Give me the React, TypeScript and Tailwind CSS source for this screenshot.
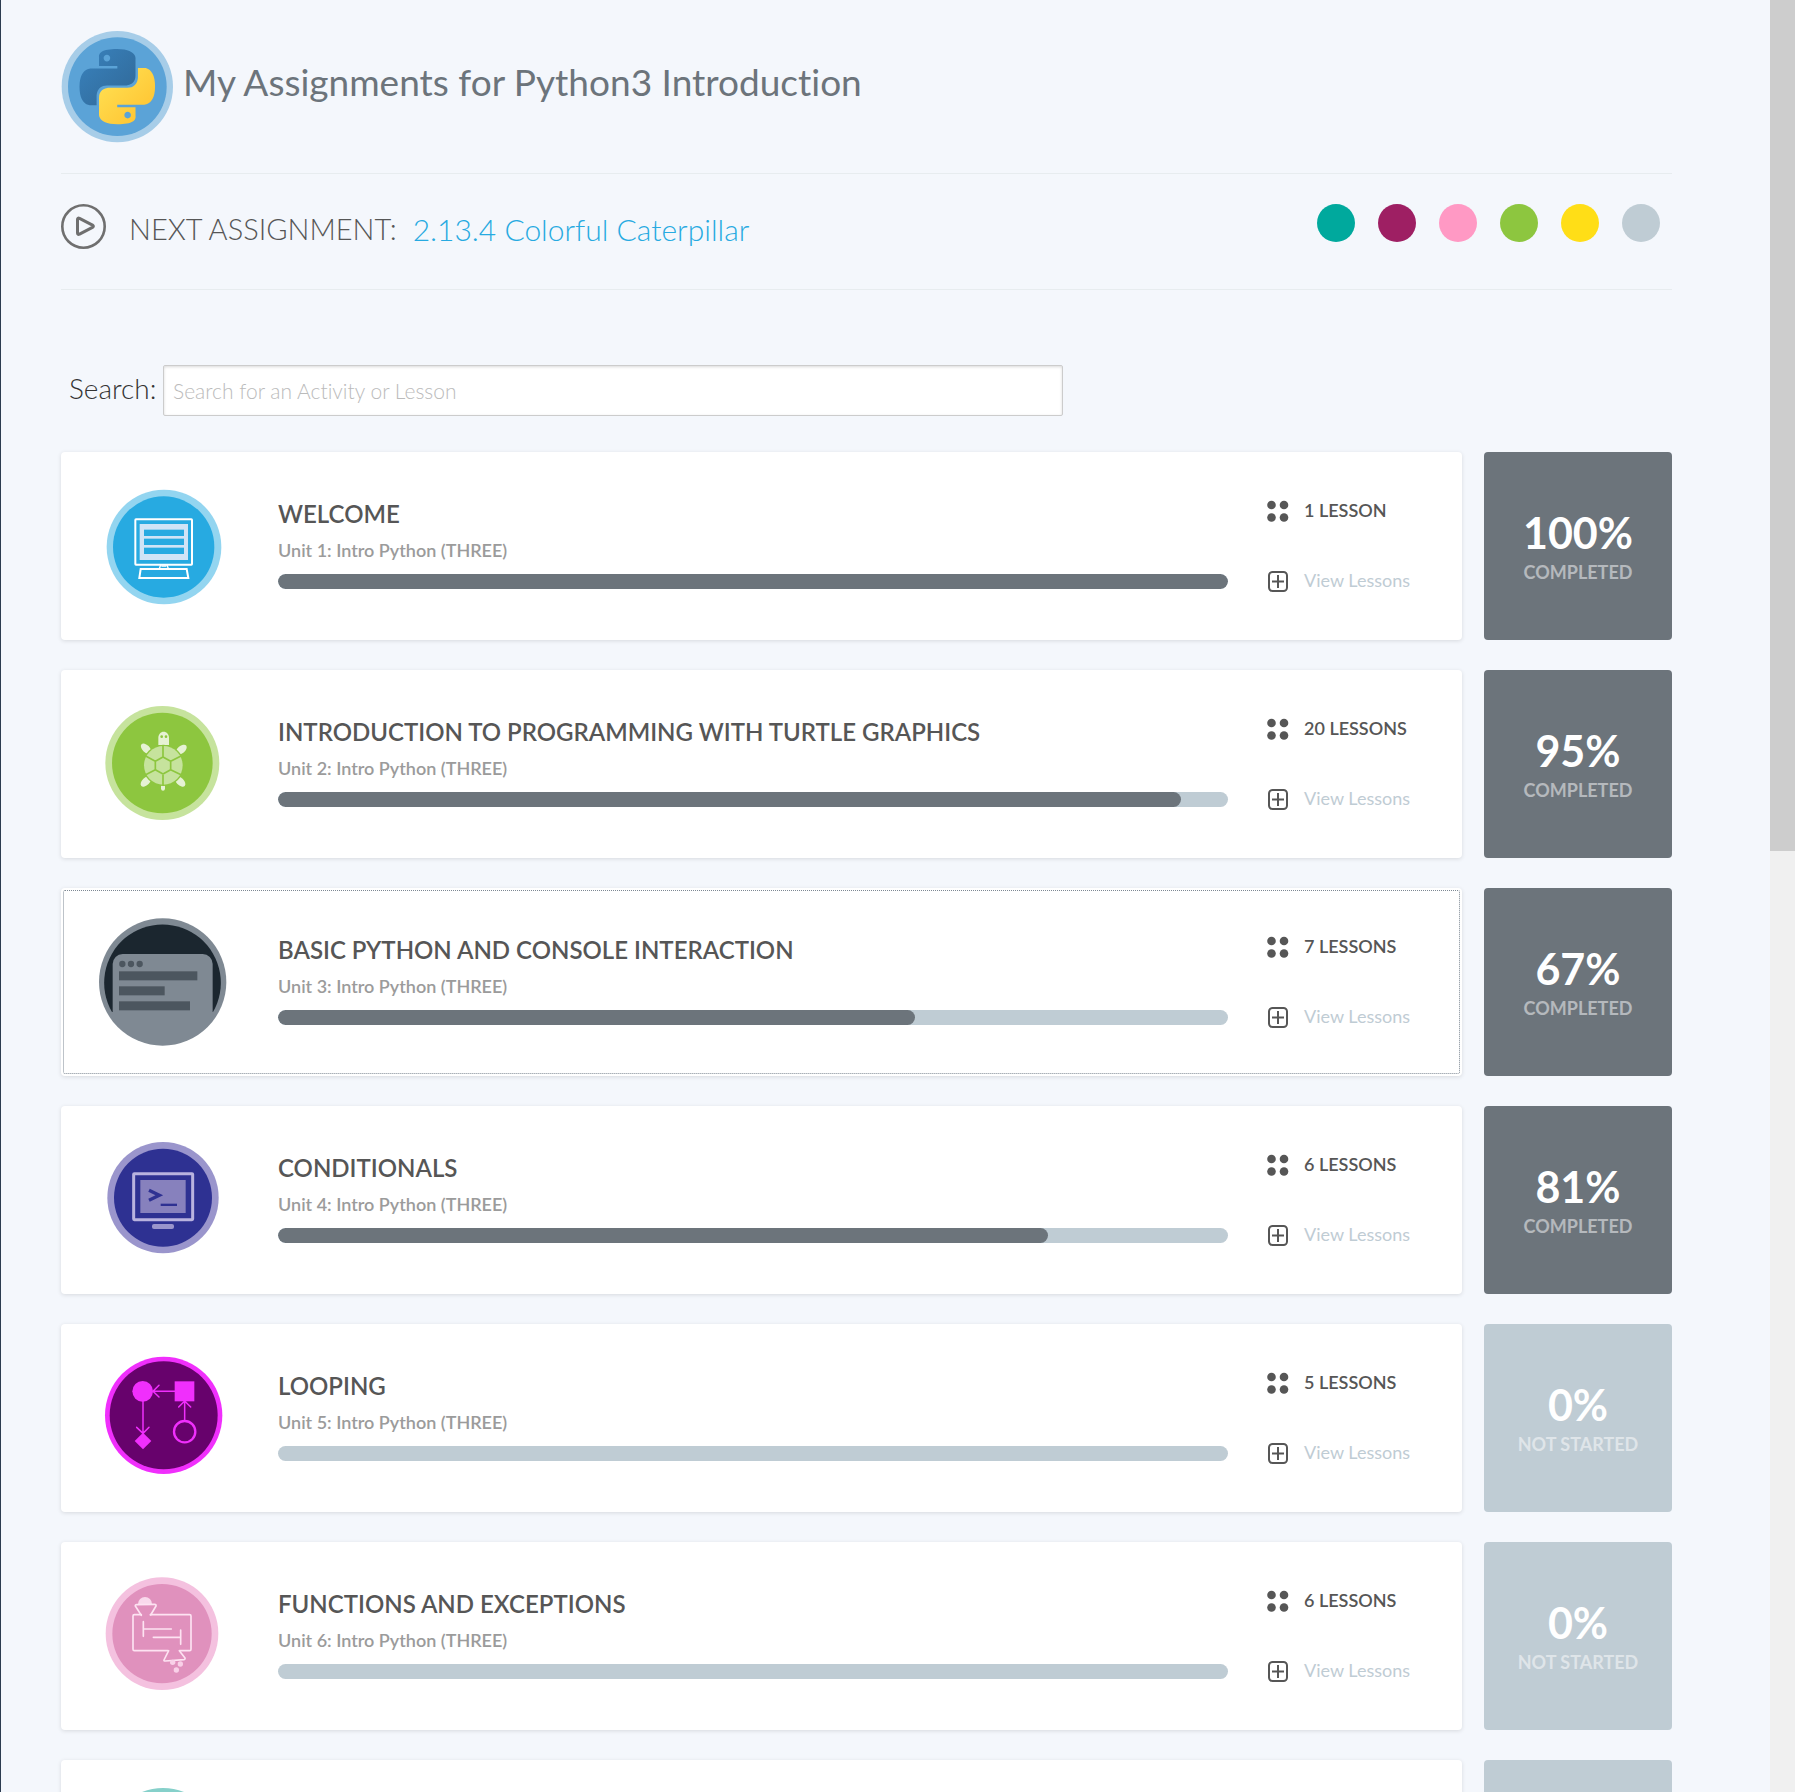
import type { ReactNode } from "react";

const PY_SNAKE =
  "M14.25.18l.9.2.73.26.59.3.45.32.34.34.25.34.16.33.1.3.04.26.02.2-.01.13V8.5l-.05.63-.13.55-.21.46-.26.38-.3.31-.33.25-.35.19-.35.14-.33.1-.3.07-.26.04-.21.02H8.77l-.69.05-.59.14-.5.22-.41.27-.33.32-.27.35-.2.36-.15.37-.1.35-.07.32-.04.27-.02.21v3.06H3.17l-.21-.03-.28-.07-.32-.12-.35-.18-.36-.26-.36-.36-.35-.46-.32-.59-.28-.73-.21-.88-.14-1.05-.05-1.23.06-1.22.16-1.04.24-.87.32-.71.36-.57.4-.44.42-.33.42-.24.4-.16.36-.1.32-.05.24-.01h.16l.06.01h8.16v-.83H6.18l-.01-2.75-.02-.37.05-.34.11-.31.17-.28.25-.26.31-.23.38-.2.44-.18.51-.15.58-.12.64-.1.71-.06.77-.04.84-.02 1.27.05zm-6.3 1.98l-.23.33-.08.41.08.41.23.34.33.22.41.09.41-.09.33-.22.23-.34.08-.41-.08-.41-.23-.33-.33-.22-.41-.09-.41.09z";

function PythonLogo() {
  return (
    <svg viewBox="64 33 336 336" className="size-28 shrink-0" aria-hidden="true">
      <defs>
        <linearGradient id="py-blue" x1="0" y1="0" x2="1" y2="1">
          <stop offset="0.1" stopColor="#3880ba" />
          <stop offset="0.9" stopColor="#316a9a" />
        </linearGradient>
        <linearGradient id="py-yellow" x1="1" y1="1" x2="0" y2="0">
          <stop offset="0.1" stopColor="#ffe052" />
          <stop offset="0.9" stopColor="#ffc331" />
        </linearGradient>
      </defs>
      <circle cx="233" cy="200" r="167" fill="#a7cde8" />
      <circle cx="233" cy="200" r="148" fill="#5ba3d7" />
      <g transform="translate(120 87) scale(9.4)">
        <path d={PY_SNAKE} fill="url(#py-blue)" />
        <path d={PY_SNAKE} fill="url(#py-yellow)" transform="rotate(180 12 12)" />
      </g>
    </svg>
  );
}

function UnitSvg({ top = 0, children }: { top?: number; children: ReactNode }) {
  return (
    <svg viewBox={`0 ${top} 450 450`} className="size-[150px]" aria-hidden="true">
      {children}
    </svg>
  );
}

function ComputerIcon() {
  return (
    <UnitSvg top={3}>
      <circle cx="222" cy="231" r="172" fill="#93d5f0" />
      <circle cx="221" cy="231" r="152" fill="#27aae1" />
      <rect x="136" y="148" width="170" height="136" rx="2" fill="none" stroke="#fff" strokeWidth="6" />
      <rect x="149" y="162" width="145" height="108" fill="#d0e4f6" />
      <rect x="162" y="179" width="120" height="19" fill="#27aae1" />
      <rect x="162" y="206" width="120" height="19" fill="#27aae1" />
      <rect x="162" y="233" width="120" height="19" fill="#27aae1" />
      <path d="M212 284l-4 12M231 284l4 12M214 288h15" stroke="#fff" strokeWidth="4" fill="none" />
      <path d="M152 297h138l5 27H148z" stroke="#fff" strokeWidth="6" fill="none" />
    </UnitSvg>
  );
}

function TurtleIcon() {
  return (
    <UnitSvg>
      <circle cx="217" cy="222" r="171" fill="#c6e39d" />
      <circle cx="217" cy="222" r="151" fill="#8dc63f" />
      <g fill="#e6f2d4">
        <path d="M205 168v-22c0-10 7-18 16-18s16 8 16 18v22z" />
        <ellipse cx="168" cy="179" rx="11" ry="19" transform="rotate(-45 168 179)" />
        <ellipse cx="274" cy="182" rx="11" ry="19" transform="rotate(50 274 182)" />
        <ellipse cx="168" cy="277" rx="11" ry="20" transform="rotate(45 168 277)" />
        <ellipse cx="270" cy="277" rx="11" ry="20" transform="rotate(-45 270 277)" />
        <path d="M213 288h12v10c0 10-12 10-12 0z" />
      </g>
      <circle cx="215" cy="143" r="4" fill="#8dc63f" />
      <circle cx="228" cy="143" r="4" fill="#8dc63f" />
      <circle cx="220" cy="229" r="62" fill="#8dc63f" />
      <circle cx="220" cy="229" r="58" fill="#c6e39d" />
      <path
        d="M219 204l23 13v25l-23 13-23-13v-25zM219 170v34M219 255v34M242 217l31-16M242 242l31 15M196 217l-29-16M196 242l-29 15"
        fill="none"
        stroke="#8dc63f"
        strokeWidth="5"
      />
    </UnitSvg>
  );
}

function ConsoleIcon() {
  return (
    <UnitSvg top={6}>
      <circle cx="218" cy="231" r="191" fill="#7f8993" />
      <path d="M66 321A175 175 0 1 1 369 321z" fill="#1b262f" />
      <path d="M68 330V177a30 30 0 0 1 30-30h240a30 30 0 0 1 30 30v153z" fill="#7f8993" />
      <g fill="#4c565f">
        <circle cx="97" cy="177" r="9.500" />
        <circle cx="123" cy="177" r="9.500" />
        <circle cx="149" cy="177" r="9.500" />
        <rect x="87" y="199" width="235" height="27" />
        <rect x="87" y="244" width="137" height="27" />
        <rect x="87" y="289" width="213" height="27" />
      </g>
    </UnitSvg>
  );
}

function TerminalIcon() {
  return (
    <UnitSvg>
      <circle cx="219" cy="218" r="167" fill="#9a95cc" />
      <circle cx="219" cy="218" r="147" fill="#2e3192" />
      <rect x="131" y="146" width="177" height="138" rx="2" fill="none" stroke="#b9b3df" strokeWidth="9" />
      <rect x="151" y="165" width="136" height="99" fill="#8781bd" />
      <path d="M177 196l31 15-31 15" fill="none" stroke="#2e3192" strokeWidth="10" />
      <rect x="212" y="236" width="49" height="7" fill="#2e3192" />
      <rect x="186" y="297" width="66" height="15" rx="6" fill="#9a95cc" />
    </UnitSvg>
  );
}

function FlowIcon() {
  return (
    <UnitSvg top={9}>
      <circle cx="221" cy="226" r="176" fill="#f02ffc" />
      <circle cx="221" cy="226" r="162" fill="#67026c" />
      <g fill="#f02ffc">
        <circle cx="158" cy="154" r="31" />
        <rect x="254" y="124" width="59" height="60" />
        <path d="M159 278l25 25-25 25-25-25z" />
      </g>
      <g fill="none" stroke="#f02ffc" strokeWidth="4.500" strokeLinecap="round">
        <path d="M254 154h-65M207 136l-18 18 18 17M159 184v94M140 262l19 18 18-18M284 241v-57M266 201l18-18 18 18" />
        <circle cx="284" cy="275" r="32" strokeWidth="7" />
      </g>
    </UnitSvg>
  );
}

function FunctionIcon() {
  return (
    <UnitSvg top={3}>
      <circle cx="216" cy="221" r="169" fill="#f4c1df" />
      <circle cx="216" cy="221" r="149" fill="#e091bd" />
      <path d="M144 132a21 21 0 0 1 42 0z" fill="#f9d9ec" />
      <g fill="none" stroke="#fde3f2" strokeWidth="5" strokeLinejoin="round" strokeLinecap="round">
        <path d="M154 164h-21q-4 0-4 4v100q0 4 4 4h100M270 272h29q4 0 4-4V168q0-4-4-4H181" />
        <path d="M154 166l-18-28q-1-4 4-4l54-1q5 0 4 5l-16 27" />
        <path d="M236 272l-14 28q-1 3 4 3l56-4q4-1 3-5l-17-22" />
        <path d="M160 185v44M160 207h84M272 210v43M272 232h-82" />
      </g>
      <g fill="#f9d0e8">
        <circle cx="248" cy="307" r="8" />
        <circle cx="271" cy="312" r="8" />
        <circle cx="259" cy="330" r="8" />
      </g>
    </UnitSvg>
  );
}

function TealIcon() {
  return (
    <UnitSvg top={3}>
      <circle cx="219" cy="201" r="171" fill="#86d0ca" />
      <circle cx="219" cy="201" r="151" fill="#00a99d" />
    </UnitSvg>
  );
}

function DotsIcon() {
  return (
    <svg viewBox="0 0 24 24" className="size-6 shrink-0" fill="#565656" aria-hidden="true">
      <circle cx="5.500" cy="7" r="4.300" />
      <circle cx="18" cy="7" r="4.300" />
      <circle cx="5.500" cy="19.500" r="4.300" />
      <circle cx="18" cy="19.500" r="4.300" />
    </svg>
  );
}

function PlusBoxIcon() {
  return (
    <svg viewBox="0 0 24 24" className="size-6 shrink-0" fill="none" stroke="#565656" strokeWidth="2" aria-hidden="true">
      <rect x="3" y="4" width="18" height="19" rx="3.500" />
      <path d="M6 13.500h12M12 7v13" />
    </svg>
  );
}

function PlayIcon() {
  return (
    <svg viewBox="0 0 45 45" className="size-[45px] shrink-0" fill="none" stroke="#6f6f6f" aria-hidden="true">
      <circle cx="22.500" cy="22.500" r="21.200" strokeWidth="2.600" />
      <path d="M16.500 15.500q0-2 2-1.200l13 6.800q1.800 1.200 0 2.300l-13 6.800q-2 .8-2-1.200z" strokeWidth="3" strokeLinejoin="round" />
    </svg>
  );
}

type Unit = {
  title: string;
  number: number;
  lessons: number;
  percent: number;
  icon: ReactNode;
  focused?: boolean;
};

const units: Unit[] = [
  { title: "WELCOME", number: 1, lessons: 1, percent: 100, icon: <ComputerIcon /> },
  { title: "INTRODUCTION TO PROGRAMMING WITH TURTLE GRAPHICS", number: 2, lessons: 20, percent: 95, icon: <TurtleIcon /> },
  { title: "BASIC PYTHON AND CONSOLE INTERACTION", number: 3, lessons: 7, percent: 67, icon: <ConsoleIcon />, focused: true },
  { title: "CONDITIONALS", number: 4, lessons: 6, percent: 81, icon: <TerminalIcon /> },
  { title: "LOOPING", number: 5, lessons: 5, percent: 0, icon: <FlowIcon /> },
  { title: "FUNCTIONS AND EXCEPTIONS", number: 6, lessons: 6, percent: 0, icon: <FunctionIcon /> },
];

function UnitCard({ unit }: { unit: Unit }) {
  const started = unit.percent > 0;
  return (
    <li className="flex gap-[22px]">
      <article
        className={
          unit.focused
            ? "flex flex-1 rounded bg-white pr-[50px] pl-[29px] shadow-[0_1px_4px_rgba(0,0,0,0.12)] outline-1 -outline-offset-3 outline-dotted outline-[#7d8893]"
            : "flex flex-1 rounded bg-white pr-[50px] pl-[29px] shadow-[0_1px_4px_rgba(0,0,0,0.12)]"
        }
      >
        <div className="flex items-center">{unit.icon}</div>
        <div className="ml-[38px] flex-1 pt-12">
          <h2 className="text-2xl leading-7 font-semibold text-[#565656]">{unit.title}</h2>
          <p className="mt-[10px] text-lg leading-6 font-semibold text-[#9b9b9b]">Unit {unit.number}: Intro Python (THREE)</p>
          <div className="mt-3 h-[15px] overflow-hidden rounded-full bg-[#bfccd4]">
            <div className="h-full rounded-full bg-[#6c747b]" style={{ width: `${unit.percent}%` }} />
          </div>
        </div>
        <div className="ml-[38px] flex w-[146px] flex-col gap-[46px] pt-[46px]">
          <p className="flex gap-[14px] text-lg leading-6 font-semibold whitespace-nowrap text-[#565656]">
            <DotsIcon />
            {unit.lessons} {unit.lessons === 1 ? "LESSON" : "LESSONS"}
          </p>
          <button type="button" className="flex gap-[14px] text-lg leading-6 whitespace-nowrap text-[#bfccd4]">
            <PlusBoxIcon />
            View Lessons
          </button>
        </div>
      </article>
      <div
        className={
          started
            ? "aspect-square w-[188px] rounded bg-[#6c747b] pt-[57px] text-center font-bold"
            : "aspect-square w-[188px] rounded bg-[#bfccd4] pt-[57px] text-center font-bold"
        }
      >
        <p className="text-[43px] leading-12 text-white">{unit.percent}%</p>
        <p className="mt-[3px] text-lg leading-6 text-white/50">{started ? "COMPLETED" : "NOT STARTED"}</p>
      </div>
    </li>
  );
}

const swatches = ["bg-[#00a99d]", "bg-[#9e1f63]", "bg-[#ff99c4]", "bg-[#8dc63f]", "bg-[#ffde17]", "bg-[#bfccd4]"];

export default function App() {
  return (
    <div className="flex h-screen overflow-hidden border-l border-[#2c3c50] bg-[#f4f7fc] font-['Lato',sans-serif] [font-variant-ligatures:none]">
      <main className="flex-1 pr-[98px] pl-[60px]">
        <header className="flex gap-[10px] border-b border-[#e7ecef] pt-[31px] pb-[30px]">
          <PythonLogo />
          <h1 className="pt-[26px] text-[37px] leading-[50px] text-[#6c747b]">My Assignments for Python3 Introduction</h1>
        </header>

        <section className="flex items-start border-b border-[#e7ecef] pt-[30px] pb-[35px]">
          <PlayIcon />
          <p className="ml-[23px] text-[29px] leading-[50px] font-light text-[#565656]">NEXT ASSIGNMENT:</p>
          <a href="#next" className="ml-4 text-[30px] leading-[50px] font-light text-[#27aae1]">
            2.13.4 Colorful Caterpillar
          </a>
          <div className="mr-3 ml-auto flex gap-[23px]">
            {swatches.map((color) => (
              <span key={color} className={`size-[38px] rounded-full ${color}`} />
            ))}
          </div>
        </section>

        <div className="mt-[75px] flex pl-2">
          <label htmlFor="search" className="w-[94px] pt-[7px] text-[28px] leading-8 font-light text-[#333]">
            Search:
          </label>
          <input
            id="search"
            type="text"
            placeholder="Search for an Activity or Lesson"
            className="h-[51px] w-[900px] rounded-xs border border-[#ccc] bg-white px-[9px] text-[21px] font-light shadow-[inset_0_1px_3px_rgba(0,0,0,0.15)] placeholder:text-[#bbb]"
          />
        </div>

        <ul className="mt-9 flex flex-col gap-[30px]">
          {units.map((unit) => (
            <UnitCard key={unit.number} unit={unit} />
          ))}
          <li className="flex gap-[22px]">
            <article className="flex flex-1 items-center rounded bg-white pl-[29px] shadow-[0_1px_4px_rgba(0,0,0,0.12)]">
              <TealIcon />
            </article>
            <div className="aspect-square w-[188px] rounded bg-[#bfccd4]" />
          </li>
        </ul>
      </main>
      <div className="w-[25px] bg-[#f0f0f0]" aria-hidden="true">
        <div className="h-[47.5%] bg-[#cdcdcd]" />
      </div>
    </div>
  );
}
